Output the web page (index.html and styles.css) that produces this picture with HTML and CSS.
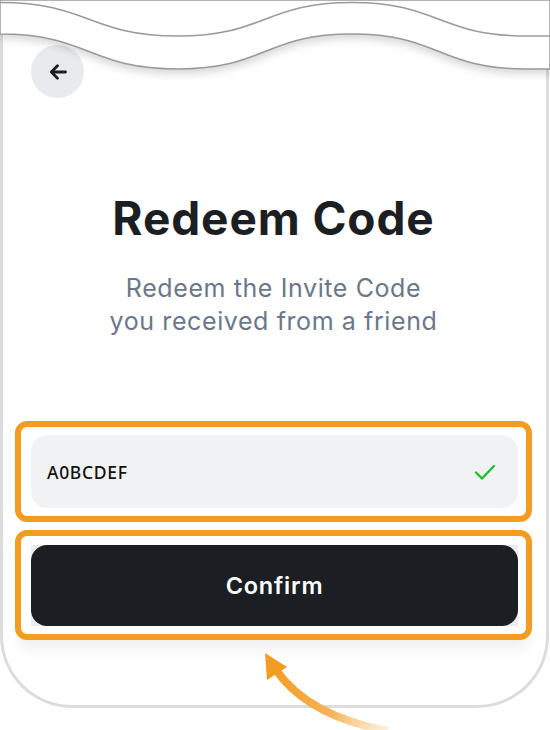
FILE: index.html
```html
<!DOCTYPE html>
<html lang="en">
<head>
  <meta charset="UTF-8">
  <meta name="viewport" content="width=device-width, initial-scale=1.0">
  <title>Redeem Code</title>
  <link rel="stylesheet" href="styles.css">
</head>
<body>
  <div class="phone">
    <div class="screen">
      <button class="back" aria-label="Back">
        <svg width="20" height="20" viewBox="0 0 20 20">
          <path d="M17.5 10H3.5M9.5 3.8L3.3 10l6.2 6.2" fill="none" stroke="#1b1e22" stroke-width="2.8" stroke-linecap="round" stroke-linejoin="round"/>
        </svg>
      </button>

      <h1 class="title">Redeem Code</h1>
      <p class="subtitle">Redeem the Invite Code<br>you received from a friend</p>

      <div class="form">
        <div class="highlight">
          <div class="field">
            <span class="code">A0BCDEF</span>
            <svg class="check" width="22" height="18" viewBox="0 0 22 18">
              <path d="M2 9.5l6 6L20 3" fill="none" stroke="#1fbf2e" stroke-width="2.4" stroke-linecap="round" stroke-linejoin="round"/>
            </svg>
          </div>
        </div>
        <div class="highlight last">
          <div class="confirm-wrap">
            <button class="confirm">Confirm</button>
          </div>
        </div>
      </div>
    </div>

    <!-- torn top edge -->
    <svg class="tear" width="550" height="90" viewBox="0 0 550 90">
      <path class="tear-fill" d="M0,0 H550 V69 L526,69 C439,69 439,34 352,34 C265,34 265,69 178,69 C89,69 89,34 0,34 Z" fill="#fff" stroke="#9a9a9a" stroke-width="1.5"/>
      <path d="M0,2.5 C89,2.5 89,36 178,36 C265,36 265,2.5 352,2.5 C439,2.5 439,36 526,36 L550,36" fill="none" stroke="#9a9a9a" stroke-width="1.5"/>
    </svg>
  </div>

  <!-- pointer annotation -->
  <svg class="pointer" width="550" height="730" viewBox="0 0 550 730">
    <defs>
      <linearGradient id="fade" x1="275" y1="670" x2="390" y2="730" gradientUnits="userSpaceOnUse">
        <stop offset="0" stop-color="#f39c24"/>
        <stop offset="0.55" stop-color="#f6b55a"/>
        <stop offset="1" stop-color="#fde8cc" stop-opacity="0.6"/>
      </linearGradient>
    </defs>
    <path d="M276,670 Q308,716 388,731" fill="none" stroke="url(#fade)" stroke-width="8"/>
    <polygon points="265,653 287,667 267,680" fill="#f39c24"/>
  </svg>
</body>
</html>
```

FILE: styles.css
```css
body {
  margin: 0;
  background-color: #fff;
  font-family: 'Inter', 'Noto Sans', sans-serif;
  color: #1b1e22;
}
.phone {
  position: relative;
  box-sizing: border-box;
  width: 549px;
  height: 708px;
  border: 3px solid #dcdcdc;
  border-top: none;
  border-radius: 0 0 72px 72px;
  background-color: #fff;
}
.screen {
  display: flex;
  flex-direction: column;
  padding: 45px 14px 0 12px;
}
.back {
  display: flex;
  align-items: center;
  justify-content: center;
  width: 53px;
  height: 53px;
  margin-left: 16px;
  padding: 0;
  border: none;
  border-radius: 50%;
  background-color: #e9eaee;
}
.title {
  margin: 94px 0 0;
  font-size: 46px;
  line-height: 53px;
  font-weight: 700;
  text-align: center;
  letter-spacing: 0.9px;
}
.subtitle {
  margin: 27px 0 0;
  font-size: 25px;
  line-height: 33px;
  color: #6b7789;
  text-align: center;
  letter-spacing: 0.6px;
}
.form {
  display: flex;
  flex-direction: column;
  gap: 8px;
  margin-top: 83px;
}
.highlight {
  border: 6px solid #f39c24;
  border-radius: 12px;
  padding: 8px 8px 8px 10px;
  background-color: #fff;
}
.highlight.last {
  padding-top: 9px;
  box-shadow: 0 14px 14px -4px rgba(0, 0, 0, 0.06);
}
.field {
  display: flex;
  align-items: center;
  justify-content: space-between;
  height: 73px;
  padding: 0 22px 0 16px;
  border-radius: 16px;
  background-color: #f1f2f4;
}
.code {
  font-family: 'Noto Sans', sans-serif;
  font-size: 17.5px;
  font-weight: 500;
  color: #111;
  letter-spacing: 0.7px;
}
.confirm-wrap {
  background-color: #ececec;
}
.confirm {
  display: block;
  width: 100%;
  height: 81px;
  border: none;
  border-radius: 16px;
  background-color: #1b1e22;
  color: #fff;
  font-family: 'Inter', sans-serif;
  font-size: 23.5px;
  font-weight: 600;
  letter-spacing: 0.8px;
}
.tear {
  position: absolute;
  top: 0;
  left: -3px;
}
.tear-fill {
  filter: drop-shadow(0 4px 4px rgba(0, 0, 0, 0.16));
}
.pointer {
  position: absolute;
  top: 0;
  left: 0;
  pointer-events: none;
}
```
